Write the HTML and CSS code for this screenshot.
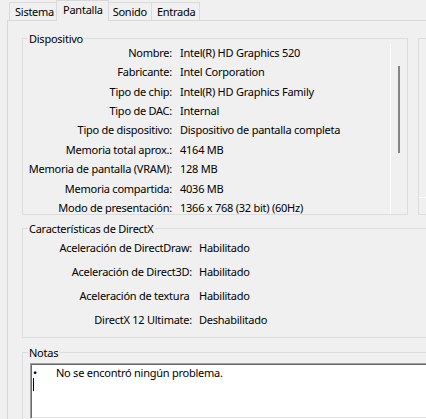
FILE: index.html
```html
<!DOCTYPE html>
<html lang="es">
<head>
    <meta charset="UTF-8">
    <title>Herramienta de diagnóstico de DirectX</title>
    <link rel="stylesheet" href="styles.css">
</head>
<body>
    <div class="window">
        <div class="tabs">
            <div class="tab">Sistema</div>
            <div class="tab tab-active">Pantalla</div>
            <div class="tab">Sonido</div>
            <div class="tab tab-last">Entrada</div>
        </div>
        <div class="panel">
            <div class="top-row">
                <fieldset class="group device">
                    <legend>Dispositivo</legend>
                    <div class="device-body">
                        <div class="rows device-rows">
                            <div class="label">Nombre:</div><div>Intel(R) HD Graphics 520</div>
                            <div class="label">Fabricante:</div><div>Intel Corporation</div>
                            <div class="label">Tipo de chip:</div><div>Intel(R) HD Graphics Family</div>
                            <div class="label">Tipo de DAC:</div><div>Internal</div>
                            <div class="label">Tipo de dispositivo:</div><div>Dispositivo de pantalla completa</div>
                            <div class="label">Memoria total aprox.:</div><div>4164 MB</div>
                            <div class="label">Memoria de pantalla (VRAM):</div><div>128 MB</div>
                            <div class="label">Memoria compartida:</div><div>4036 MB</div>
                            <div class="label">Modo de presentación:</div><div>1366 x 768 (32 bit) (60Hz)</div>
                        </div>
                        <div class="scroll"><div class="thumb"></div></div>
                    </div>
                </fieldset>
                <fieldset class="group drivers">
                    <div class="drivers-inner"></div>
                </fieldset>
            </div>
            <fieldset class="group directx">
                <legend>Características de DirectX</legend>
                <div class="rows dx-rows">
                    <div class="label">Aceleración de DirectDraw:</div><div>Habilitado</div>
                    <div class="label">Aceleración de Direct3D:</div><div>Habilitado</div>
                    <div class="label">Aceleración de textura&nbsp;</div><div>Habilitado</div>
                    <div class="label">DirectX 12 Ultimate:</div><div>Deshabilitado</div>
                </div>
            </fieldset>
            <fieldset class="group notes">
                <legend>Notas</legend>
                <div class="notes-box">
                    <div class="note"><span class="bullet">•</span>No se encontró ningún problema.</div>
                    <div class="caret"></div>
                </div>
            </fieldset>
        </div>
    </div>
</body>
</html>
```
FILE: styles.css
```css
html, body {
    overflow: hidden;
}
body {
    margin: 0;
    background-color: #f0f0f0;
    font-family: "Noto Sans", "Open Sans", sans-serif;
    font-size: 11px;
    letter-spacing: -0.25px;
    color: #000;
}
.window {
    overflow: hidden;
    padding-left: 7px;
}

/* tab strip */
.tabs {
    display: flex;
    align-items: flex-end;
    height: 20px;
    padding-left: 2px;
}
.tab {
    box-sizing: border-box;
    height: 18px;
    line-height: 18px;
    padding: 0 4px 0 5px;
    border: 1px solid #d9d9d9;
    border-right: none;
    border-bottom: none;
}
.tab-last {
    border-right: 1px solid #d9d9d9;
}
.tab-active {
    position: relative; /* keep it above the neighbours */
    z-index: 1;
    height: 21px;
    line-height: 18px;
    margin: 0 -2px -1px;
    padding: 0 5px 0 6px;
    border-right: 1px solid #d9d9d9;
    background-color: #f0f0f0;
}
.panel {
    border-top: 1px solid #d9d9d9;
    border-left: 1px solid #d9d9d9;
    padding-left: 14px;
}

/* group boxes */
.group {
    margin: 0;
    padding: 0;
    min-width: 0;
    border: 1px solid #dcdcdc;
}
.group legend {
    margin-left: 5px;
    padding: 0 1px;
    line-height: 1px; /* legend sits right on the border line */
}
.top-row {
    display: flex;
    align-items: flex-start;
    margin-top: 17px;
}
.device {
    box-sizing: border-box;
    flex: none;
    width: 386px;
}
.device-body {
    display: flex;
    height: 175px;
}
.rows {
    display: grid;
    align-content: start;
    align-items: center;
    white-space: nowrap;
}
.rows .label {
    text-align: right;
}
.device-rows {
    flex: 1;
    overflow: hidden;
    grid-template-columns: 149px auto;
    grid-auto-rows: 19.45px;
    column-gap: 8px;
    padding-top: 4px;
    line-height: 12px;
}
.scroll {
    width: 16px;
    margin-top: 5px;
    border-left: 1px solid #fff;
}
.thumb {
    width: 2px;
    height: 87px;
    margin: 22px 0 0 7px;
    background-color: #858585;
}
.drivers {
    flex: none;
    width: 100px;
    margin-left: 10px;
}
.drivers-inner {
    height: 158px;
    margin-bottom: 16px;
    border-bottom: 1px solid #fff;
}
.directx {
    width: 420px;
    margin-top: 13px;
}
.dx-rows {
    grid-template-columns: 169px auto;
    grid-auto-rows: 24px;
    column-gap: 7px;
    padding: 7px 0 5px;
    line-height: 14px;
}
.notes {
    width: 420px;
    margin-top: 14px;
}
.notes-box {
    box-sizing: border-box;
    height: 56px;
    margin: 10px 0 0 7px;
    padding: 1px 0 0 1px;
    background-color: #fff;
    border: 1px solid;
    border-color: #a0a0a0 #fff #fff #a0a0a0;
    box-shadow: inset 1px 1px 0 #696969, inset -1px -1px 0 #e3e3e3;
}
.note {
    padding: 1px 0 0 1px;
    line-height: 13px;
}
.bullet {
    display: inline-block;
    width: 23px;
}
.caret {
    width: 1px;
    height: 13px;
    margin: -1px 0 0 1px;
    background-color: #000;
}
```
